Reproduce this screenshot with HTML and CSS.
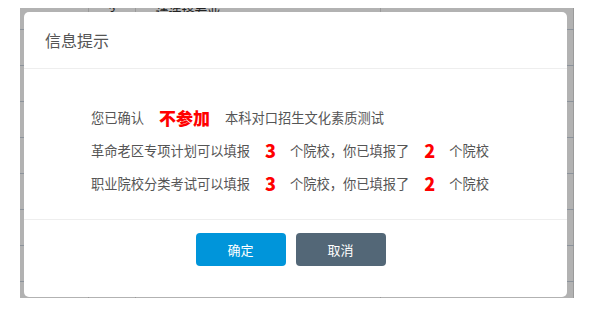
FILE: index.html
```
<!DOCTYPE html>
<html lang="zh-CN">

<head>
    <meta charset="UTF-8">
    <meta name="viewport" content="width=device-width, initial-scale=1.0">
    <title>信息提示</title>
    <link rel="stylesheet" href="styles.css">
</head>

<body>
    <div class="frame">
        <!-- page behind the dialog -->
        <table class="bg-table">
            <tr><td class="c1"></td><td class="c2">3</td><td class="c3">---请选择专业---</td><td class="c4"></td></tr>
            <tr><td></td><td></td><td></td><td></td></tr>
            <tr><td></td><td></td><td></td><td></td></tr>
            <tr><td></td><td></td><td></td><td></td></tr>
            <tr><td></td><td></td><td></td><td></td></tr>
            <tr><td></td><td></td><td></td><td></td></tr>
            <tr><td></td><td></td><td></td><td></td></tr>
            <tr><td></td><td></td><td></td><td></td></tr>
            <tr><td></td><td></td><td></td><td></td></tr>
        </table>
        <div class="mask"></div>

        <div class="dialog">
            <div class="dialog-header">信息提示</div>
            <div class="dialog-body">
                <p>您已确认<span class="hl">不参加</span>本科对口招生文化素质测试</p>
                <p>革命老区专项计划可以填报<span class="hl num">3</span>个院校，你已填报了<span class="hl num">2</span>个院校</p>
                <p>职业院校分类考试可以填报<span class="hl num">3</span>个院校，你已填报了<span class="hl num">2</span>个院校</p>
            </div>
            <div class="dialog-footer">
                <button class="btn btn-ok">确定</button>
                <button class="btn btn-cancel">取消</button>
            </div>
        </div>
    </div>
</body>

</html>
```

FILE: styles.css
```
body {
    margin: 0;
    background: #fff;
    font-family: "Noto Sans CJK SC", "Noto Sans", sans-serif;
    color: #555;
}

.frame {
    position: relative;
    margin: 8px 0 0 20px;
    width: 554px;
    height: 290px;
    overflow: hidden;
    background: #fff;
}

.bg-table {
    margin-top: -14px;
    width: 100%;
    border-collapse: collapse;
    font-size: 13px;
    color: #333;
}

.bg-table td {
    height: 35px;
    border-bottom: 1px solid #c9d3de;
    border-right: 1px solid #ddd;
    padding: 0 6px;
}

.bg-table .c1 { width: 56px; }
.bg-table .c2 { width: 34px; text-align: center; }
.bg-table .c3 { width: 232px; }

.mask {
    position: absolute;
    inset: 0;
    background: rgba(0, 0, 0, 0.3);
}

.dialog {
    position: absolute;
    left: 4px;
    top: 4px;
    width: 543px;
    height: 285px;
    background: #fff;
    border-radius: 5px;
    display: flex;
    flex-direction: column;
}

.dialog-header {
    height: 56px;
    line-height: 56px;
    padding-left: 21px;
    font-size: 16px;
    color: #555;
    border-bottom: 1px solid #eee;
}

.dialog-body {
    padding: 32px 0 19px 67px;
    border-bottom: 1px solid #eee;
    font-size: 13.25px;
}

.dialog-body p {
    margin: 0;
    height: 33px;
    line-height: 33px;
}

.hl {
    color: #f00;
    font-weight: 900;
    font-size: 17px;
    margin: 0 15px;
    vertical-align: top;
}

.hl.num {
    font-size: 18px;
    margin: 0 14px 0 15px;
}

.dialog-footer {
    display: flex;
    justify-content: center;
    gap: 10px;
    padding: 13px 10px 0 0;
}

.btn {
    width: 90px;
    height: 33px;
    border: none;
    border-radius: 4px;
    color: #fff;
    font-family: inherit;
    font-size: 13px;
    cursor: pointer;
}

.btn-ok {
    background: #0095da;
}

.btn-cancel {
    background: #536777;
}
```
